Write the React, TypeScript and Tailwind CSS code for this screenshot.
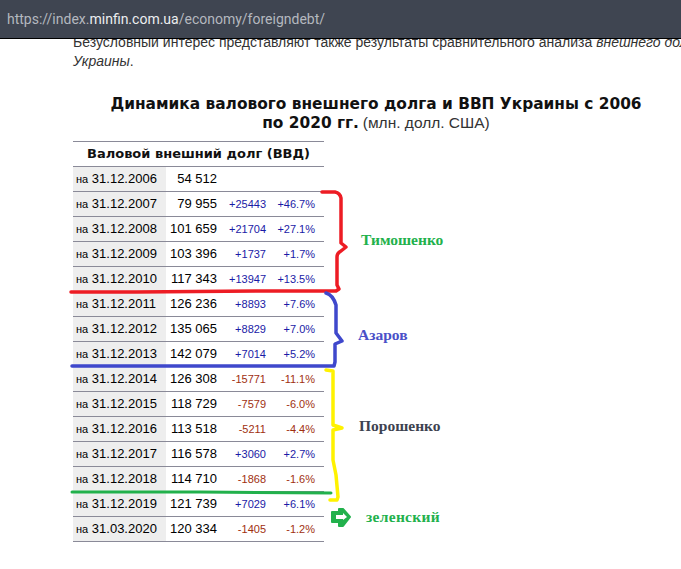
import React from 'react';

type Row = { date: string; value: string; delta?: string; pct?: string };

const rows: Row[] = [
	{ date: '31.12.2006', value: '54 512' },
	{ date: '31.12.2007', value: '79 955', delta: '+25443', pct: '+46.7%' },
	{ date: '31.12.2008', value: '101 659', delta: '+21704', pct: '+27.1%' },
	{ date: '31.12.2009', value: '103 396', delta: '+1737', pct: '+1.7%' },
	{ date: '31.12.2010', value: '117 343', delta: '+13947', pct: '+13.5%' },
	{ date: '31.12.2011', value: '126 236', delta: '+8893', pct: '+7.6%' },
	{ date: '31.12.2012', value: '135 065', delta: '+8829', pct: '+7.0%' },
	{ date: '31.12.2013', value: '142 079', delta: '+7014', pct: '+5.2%' },
	{ date: '31.12.2014', value: '126 308', delta: '-15771', pct: '-11.1%' },
	{ date: '31.12.2015', value: '118 729', delta: '-7579', pct: '-6.0%' },
	{ date: '31.12.2016', value: '113 518', delta: '-5211', pct: '-4.4%' },
	{ date: '31.12.2017', value: '116 578', delta: '+3060', pct: '+2.7%' },
	{ date: '31.12.2018', value: '114 710', delta: '-1868', pct: '-1.6%' },
	{ date: '31.12.2019', value: '121 739', delta: '+7029', pct: '+6.1%' },
	{ date: '31.03.2020', value: '120 334', delta: '-1405', pct: '-1.2%' },
];

const DebtRow: React.FC<{ row: Row }> = ({ row }) => {
	const tone = row.delta?.startsWith('-') ? 'text-[#a03010]' : 'text-[#1a1aa6]';
	return (
		<tr className="h-[25px] border-b border-[#8a8a98]">
			<td className="bg-[#eeeeee] pl-[3px] text-[13px] text-black whitespace-nowrap">
				<span className="text-[11px]">на</span> {row.date}
			</td>
			<td className="text-right text-[13px] text-black whitespace-nowrap">{row.value}</td>
			<td className={`text-right text-[11px] whitespace-nowrap ${tone}`}>{row.delta}</td>
			<td className={`pr-[9px] text-right text-[11px] whitespace-nowrap ${tone}`}>{row.pct}</td>
		</tr>
	);
};

const Markup: React.FC = () => (
	<svg className="absolute left-0 top-0" width="681" height="569" fill="none" strokeLinecap="round" strokeLinejoin="round">
		<path
			d="M322 192 L335 192 Q340 193 341 198 L341 243 L346 247 L341 251 Q337 253 337 257 L337 285 L339 289 L336 291 L265 291 L136 292 L71 292"
			stroke="#ed1c24"
			strokeWidth="3.5"
		/>
		<path
			d="M326 293 Q333 295 336 305 L336 333 L342 341 L335 344 L335 362 L334 366 L72 366"
			stroke="#3f48cc"
			strokeWidth="3.5"
		/>
		<path
			d="M326 370 L333 371 L333 425 L342 428 L333 430 L333 460 L336 475 L338 497 L337 500 L330 500"
			stroke="#fff200"
			strokeWidth="3.5"
		/>
		<path d="M72 492 L200 492 L331 493" stroke="#22b14c" strokeWidth="3" />
		<path d="M332 512 L339 512 L339 509 L343 509 L350 517 L343 526 L339 526 L339 522 L332 522 Z" fill="#22b14c" stroke="#22b14c" strokeWidth="2" />
		<path d="M336 515 L343 515 L343 513 L347 517 L343 520 L343 519 L336 519 Z" fill="#ffffff" />
	</svg>
);

const Note: React.FC<{ className: string; children: React.ReactNode }> = ({ className, children }) => (
	<div className={`absolute font-['Liberation_Serif',serif] text-[15.5px] font-bold leading-none whitespace-nowrap ${className}`}>
		{children}
	</div>
);

export default function App() {
	return (
		<div className="relative h-[569px] w-[681px] overflow-hidden bg-white font-['Liberation_Sans',Arial,sans-serif]">
			<header className="relative z-10 flex h-[39px] items-center border-b border-black bg-[#3f4551] pl-[7px] font-['Roboto',sans-serif] text-[14px] text-[#b4b8bf]">
				https://index.<span className="text-[#eceef0]">minfin.com.ua</span>/economy/foreigndebt/
			</header>

			<main className="pl-[73px]">
				<p className="mt-[-6px] whitespace-nowrap text-[14px] leading-[19px] text-[#333333]">
					Безусловный интерес представляют также результаты сравнительного анализа <em>внешнего долга</em>
					<br />
					<em>Украины</em>.
				</p>

				<h2 className="mt-[24px] w-[606px] text-center text-[14px] leading-[19px] text-[#333333]">
					<strong className="font-['DejaVu_Sans',sans-serif] text-[15.4px] text-[#111111]">
						Динамика валового внешнего долга и ВВП Украины с 2006
						<br />
						по 2020 гг.
					</strong>{' '}
					<span className="text-[15.5px] leading-none">(млн. долл. США)</span>
				</h2>

				<table className="mt-[8px] w-[251px] table-fixed border-collapse border-t border-[#8a8a98]">
					<colgroup>
						<col className="w-[93px]" />
						<col className="w-[51px]" />
						<col className="w-[49px]" />
						<col className="w-[58px]" />
					</colgroup>
					<thead>
						<tr className="h-[25px] border-b border-[#8a8a98]">
							<th colSpan={4} className="text-center font-['DejaVu_Sans',sans-serif] text-[13px] font-bold text-[#111111]">
								Валовой внешний долг (ВВД)
							</th>
						</tr>
					</thead>
					<tbody>
						{rows.map(row => (
							<DebtRow key={row.date} row={row} />
						))}
					</tbody>
				</table>
			</main>

			<Markup />
			<Note className="left-[361px] top-[232px] text-[#22b14c]">Тимошенко</Note>
			<Note className="left-[358px] top-[327px] text-[#4a50c8]">Азаров</Note>
			<Note className="left-[359px] top-[418px] text-[#3d4250]">Порошенко</Note>
			<Note className="left-[366px] top-[509px] tracking-[0.3px] text-[#22b14c]">зеленский</Note>
		</div>
	);
}
